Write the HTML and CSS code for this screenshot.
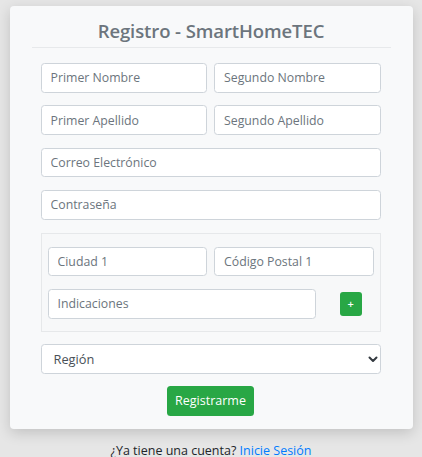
FILE: index.html
```html
<!DOCTYPE html>
<html lang="es">
<head>
<meta charset="utf-8">
<title>Registro - SmartHomeTEC</title>
<link rel="stylesheet" href="styles.css">
</head>
<body>
<div class="page">
  <div class="card">
    <h4 class="title">Registro - SmartHomeTEC</h4>
    <hr class="divider">
    <form class="form">
      <div class="row two">
        <input class="field" type="text" placeholder="Primer Nombre">
        <input class="field" type="text" placeholder="Segundo Nombre">
      </div>
      <div class="row two">
        <input class="field" type="text" placeholder="Primer Apellido">
        <input class="field" type="text" placeholder="Segundo Apellido">
      </div>
      <div class="row">
        <input class="field" type="email" placeholder="Correo Electrónico">
      </div>
      <div class="row">
        <input class="field" type="password" placeholder="Contraseña">
      </div>
      <div class="box">
        <div class="row two">
          <input class="field" type="text" placeholder="Ciudad 1">
          <input class="field" type="text" placeholder="Código Postal 1">
        </div>
        <div class="row extra">
          <input class="field ind" type="text" placeholder="Indicaciones">
          <button class="plus" type="button">+</button>
        </div>
      </div>
      <div class="row selwrap">
        <select class="field select">
          <option>Región</option>
        </select>
        <svg class="chev" width="10" height="8" viewBox="0 0 10 8"><path d="M1.5 2.5 L5 6 L8.5 2.5" fill="none" stroke="#343a40" stroke-width="2" stroke-linecap="round" stroke-linejoin="round"/></svg>
      </div>
      <div class="actions">
        <button class="submit" type="button">Registrarme</button>
      </div>
    </form>
  </div>
  <p class="footer">¿Ya tiene una cuenta? <a href="#" class="link">Inicie Sesión</a></p>
</div>
</body>
</html>
```
FILE: styles.css
```css
* { box-sizing: border-box; }
html, body { margin: 0; padding: 0; }
body {
  background: #e6e6e6;
  font-family: "Open Sans", "Noto Sans", sans-serif;
  color: #212529;
  height: 457px;
  overflow: hidden;
}
.page {
  display: flex;
  flex-direction: column;
  align-items: center;
  padding-top: 6px;
}
.card {
  width: 403px;
  background: #f8f9fa;
  border-radius: 4px;
  box-shadow: 0 4px 14px rgba(0,0,0,0.16);
  padding: 10px 22px 13px;
}
.title {
  margin: 0;
  text-align: center;
  font-size: 18.5px;
  font-weight: 600;
  color: #6c757d;
  line-height: 30px;
  letter-spacing: -0.1px;
}
.divider {
  margin: 1px 0 15px;
  border: 0;
  border-top: 1px solid #e7e9eb;
}
.form {
  padding: 0 10px 0 9px;
  display: flex;
  flex-direction: column;
  gap: 12.8px;
}
.row { display: flex; }
.two { display: grid; grid-template-columns: 1fr 1fr; gap: 7px; }
.field {
  width: 100%;
  height: 29.6px;
  border: 1px solid #ced4da;
  border-radius: 3.5px;
  background: #fff;
  padding: 0 9px;
  font-family: inherit;
  font-size: 12.3px;
  color: #495057;
  outline: none;
}
.field::placeholder { color: #6c757d; opacity: 1; }
.box {
  border: 1px solid #e6e8ea;
  background: #f7f8f9;
  padding: 13px 6px 12px;
  display: flex;
  flex-direction: column;
  gap: 12.8px;
}
.extra { align-items: center; }
.ind { width: 268px; flex: none; }
.plus {
  margin-left: 24px;
  width: 22.5px;
  height: 23.5px;
  border: 0;
  border-radius: 3px;
  background: #28a745;
  color: #fff;
  font-family: inherit;
  font-size: 11px;
  font-weight: 600;
  padding: 0;
  line-height: 1;
}
.selwrap { position: relative; }
.select {
  appearance: none;
  -webkit-appearance: none;
  padding-left: 12px;
  font-size: 12.8px;
  color: #495057;
}
.chev {
  position: absolute;
  right: 3px;
  top: 11px;
}
.actions {
  display: flex;
  justify-content: center;
  margin-top: -0.8px;
}
.submit {
  width: 87px;
  height: 30px;
  border: 0;
  border-radius: 3.5px;
  background: #28a745;
  color: #fff;
  font-family: inherit;
  font-size: 12.5px;
  padding: 0;
}
.footer {
  margin: 13px 0 0;
  font-size: 12.5px;
  color: #212529;
  text-align: center;
}
.link { color: #007bff; text-decoration: none; }
```
